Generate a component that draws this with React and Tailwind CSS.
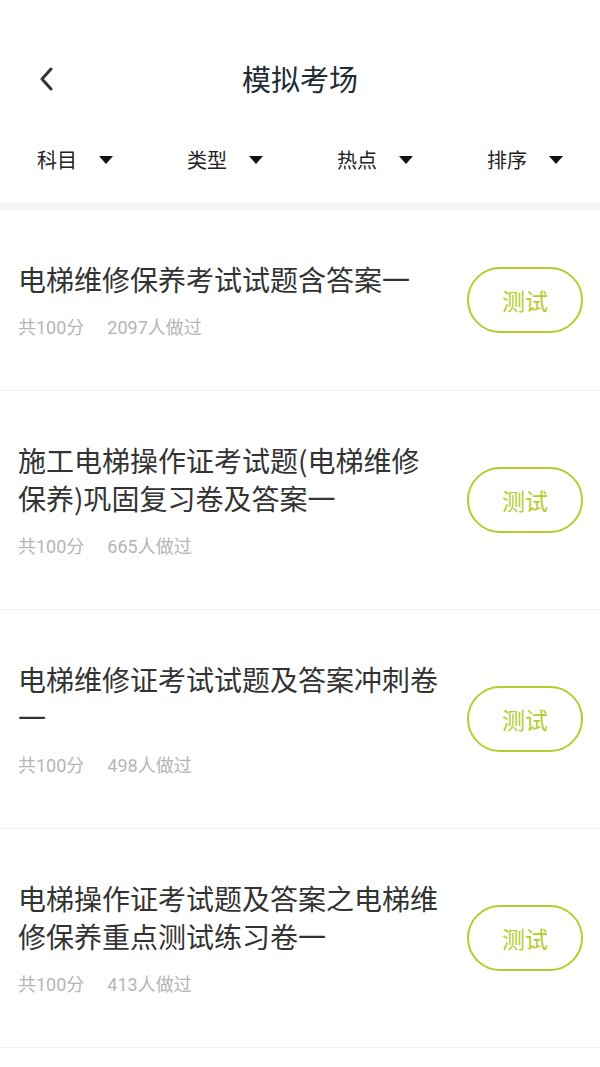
import React from 'react';

const exams = [
    { title: '电梯维修保养考试试题含答案一', score: '共100分', count: '2097人做过' },
    { title: '施工电梯操作证考试题(电梯维修保养)巩固复习卷及答案一', score: '共100分', count: '665人做过' },
    { title: '电梯维修证考试试题及答案冲刺卷一', score: '共100分', count: '498人做过' },
    { title: '电梯操作证考试题及答案之电梯维修保养重点测试练习卷一', score: '共100分', count: '413人做过' },
];

const filters = ['科目', '类型', '热点', '排序'];

function Caret() {
    return (
        <svg width="14" height="8" viewBox="0 0 14 8" className="shrink-0">
            <path d="M0 0H14L7 8Z" fill="#111" />
        </svg>
    );
}

function ExamRow({ exam }) {
    return (
        <div className="flex items-center justify-between border-b border-[#f1f1f1] pl-[18px] pr-[17px] py-[52px]">
            <div className="w-[424px]">
                <div className="relative -top-[2px] text-[28px] leading-[38px] text-[#333333]">{exam.title}</div>
                <div className="mt-[18px] flex gap-[23px] font-['Roboto','Noto_Sans_CJK_SC',sans-serif] text-[18px] leading-[20px] text-[#b5b5b5]">
                    <span>{exam.score}</span>
                    <span>{exam.count}</span>
                </div>
            </div>
            <button className="flex h-[66px] w-[116px] shrink-0 items-center justify-center rounded-full border-2 border-[#b4cc2c] text-[23px] text-[#b4cc2c]">
                测试
            </button>
        </div>
    );
}

export default function App() {
    return (
        <div className="min-h-screen bg-white font-['Noto_Sans_CJK_SC',sans-serif]">
            <div className="pt-[39px]">
                <div className="relative flex h-[80px] items-center justify-center">
                    <button className="absolute left-[35px] top-1/2 -translate-y-1/2 p-1">
                        <svg width="14" height="24" viewBox="0 0 14 24" fill="none">
                            <path d="M12 2L3 12L12 22" stroke="#333" strokeWidth="3" strokeLinecap="round" strokeLinejoin="round" />
                        </svg>
                    </button>
                    <h1 className="text-[29px] text-[#222a36]">模拟考场</h1>
                </div>
                <div className="flex h-[83px] items-center">
                    {filters.map((f) => (
                        <div key={f} className="-mt-[2px] flex w-1/4 items-center gap-[22px] pl-[37px]">
                            <span className="text-[20px] text-[#222]">{f}</span>
                            <Caret />
                        </div>
                    ))}
                </div>
            </div>
            <div className="h-[8px] bg-[#f6f6f6]" />
            <div>
                {exams.map((e) => (
                    <ExamRow key={e.title} exam={e} />
                ))}
            </div>
        </div>
    );
}
